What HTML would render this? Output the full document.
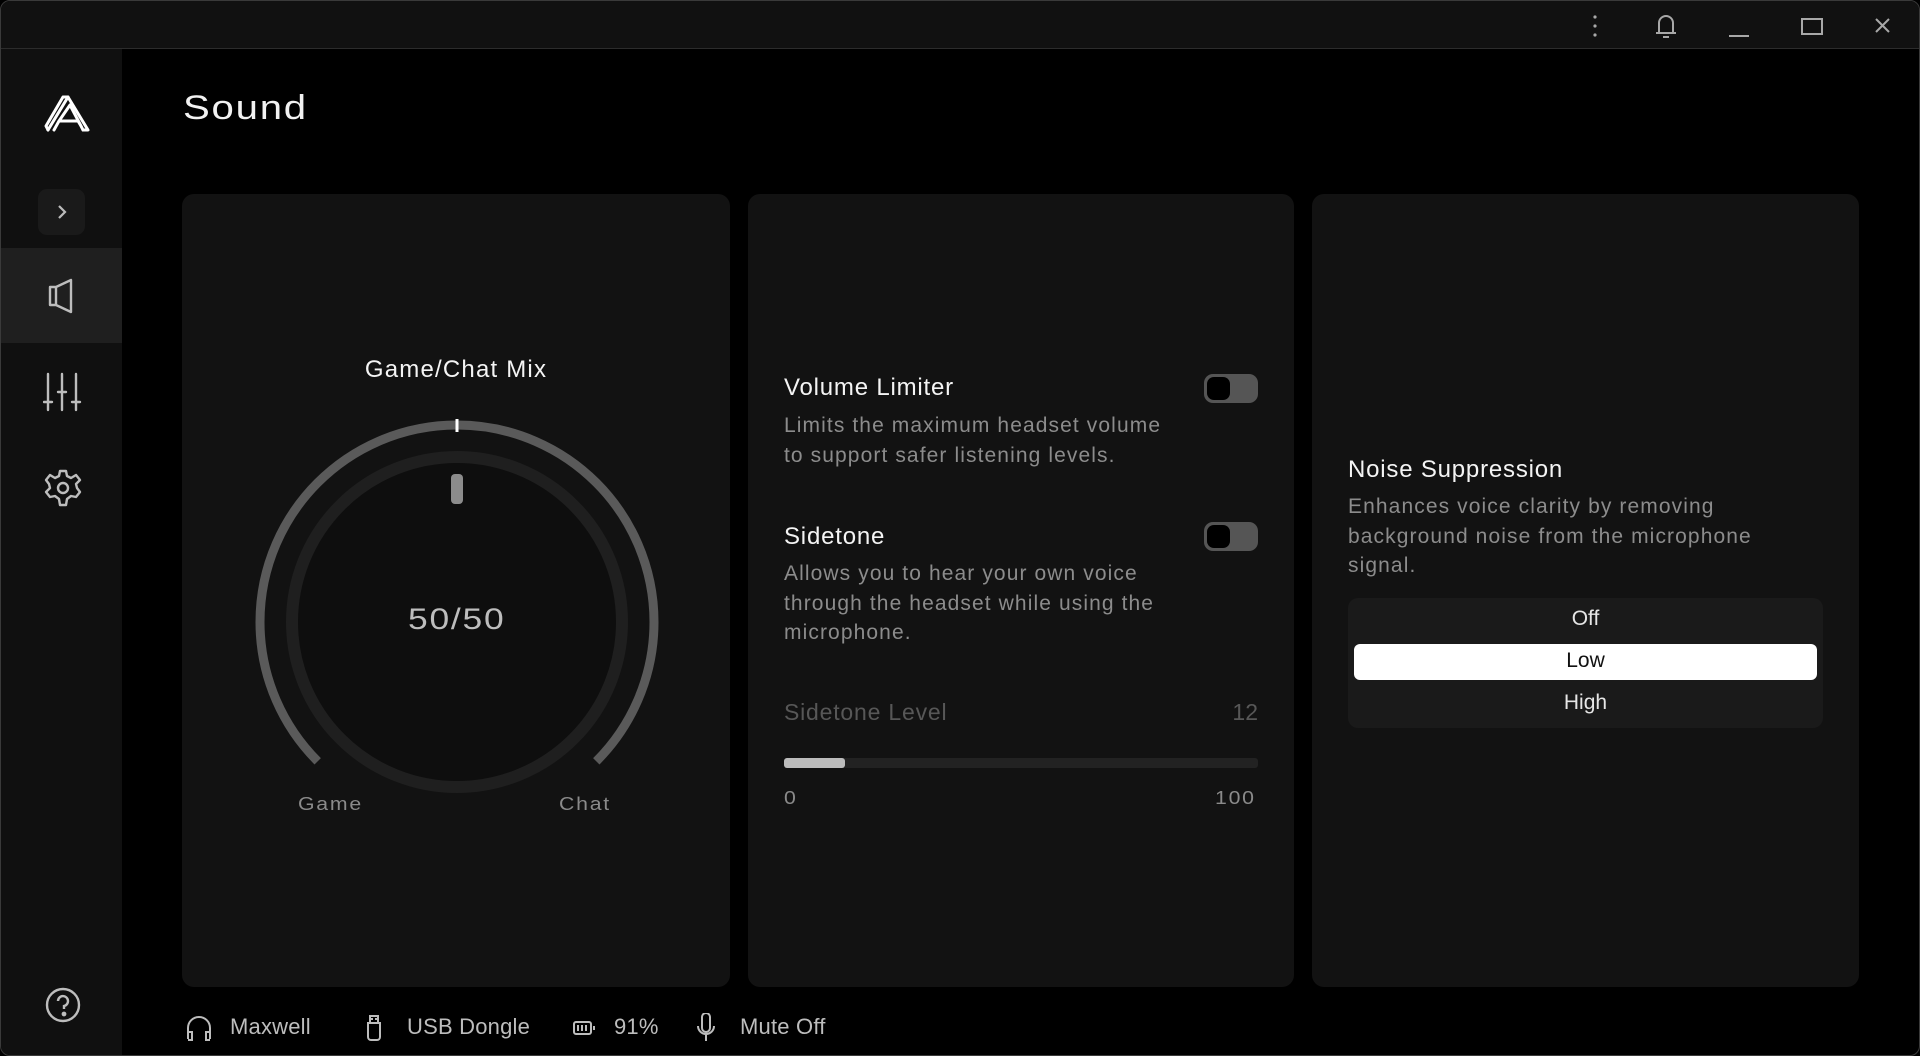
<!DOCTYPE html>
<html><head><meta charset="utf-8"><style>
*{margin:0;padding:0;box-sizing:border-box}
html,body{width:1920px;height:1056px;background:#000;overflow:hidden;font-family:"Liberation Sans",sans-serif;color:#fff}
.win{position:absolute;left:0;top:0;width:1920px;height:1056px;background:#000;border:1px solid #3a3a3a;border-radius:10px;overflow:hidden}
.title{position:absolute;left:0;top:0;width:1920px;height:48px;background:#111;border-bottom:1px solid #2c2c2c}
.side{position:absolute;left:0;top:48px;width:121px;height:1008px;background:#101010}
.act{position:absolute;left:0;top:199px;width:121px;height:95px;background:#1f1f1f}
.chev{position:absolute;left:37px;top:140px;width:47px;height:46px;background:#1a1a1a;border-radius:9px}
.abs{position:absolute}
.card{position:absolute;top:193px;height:793px;background:#121212;border-radius:12px}
.wide{letter-spacing:1.5px;display:inline-block;transform:scaleX(1.18);transform-origin:left center}
.h{font-size:24px;color:#f4f4f4;letter-spacing:0.8px}
.d{font-size:21px;color:#8c8c8c;line-height:29.5px;letter-spacing:1.1px}
.tog{position:absolute;width:54px;height:29px;background:#555;border-radius:9px}
.tog:after{content:"";position:absolute;left:3px;top:3px;width:23px;height:23px;background:#000;border-radius:7px}
.foot{position:absolute;top:1013px;font-size:22px;color:#bdbdbd;letter-spacing:0.2px}
</style></head><body>
<div class="win">
<div class="title">
<svg class="abs" style="left:1580px;top:10px" width="320" height="30" fill="none" stroke="#a8a8a8" stroke-width="2">
<circle cx="14" cy="6" r="1.6" fill="#a8a8a8" stroke="none"/><circle cx="14" cy="15" r="1.6" fill="#a8a8a8" stroke="none"/><circle cx="14" cy="24" r="1.6" fill="#a8a8a8" stroke="none"/>
<path d="M78 22 V12 a7 7 0 0 1 14 0 V22 Z M75 22 H95 M82 26 H88"/>
<path d="M148 25 H168"/>
<rect x="221" y="8" width="20" height="15"/>
<path d="M295 8 L308 21 M308 8 L295 21"/>
</svg>
</div>
<div class="side">
<div class="act"></div>
<svg class="abs" style="left:42px;top:44px" width="50" height="42" fill="none" stroke="#fff" stroke-width="3" stroke-linejoin="round" stroke-linecap="round">
<path d="M5 37 L25 4 L45 37 H40"/><path d="M25 4 L20 4 L3 33 L5 37"/><path d="M11 37 L16 28 H35 L38 33 M16 28 L27 12 L38 33 L40 37"/>
</svg>
<div class="chev"><svg class="abs" style="left:16px;top:15px" width="16" height="16" fill="none" stroke="#bbb" stroke-width="2.2"><path d="M5 2 L11 8 L5 14"/></svg></div>
<svg class="abs" style="left:46px;top:228px" width="30" height="38" fill="none" stroke="#bdbdbd" stroke-width="2.4" stroke-linejoin="round">
<path d="M3 10 H9 L24 3 V35 L9 28 H3 Z M9 10 V28"/>
</svg>
<svg class="abs" style="left:42px;top:323px" width="40" height="40" fill="none" stroke="#bdbdbd" stroke-width="2.4" stroke-linecap="round">
<path d="M5 2 V38 M19 2 V38 M33 2 V38 M1 30 H9 M15 20 H23 M29 30 H37"/>
</svg>
<svg class="abs" style="left:43px;top:420px" width="38" height="38" fill="none" stroke="#bdbdbd" stroke-width="2.4" stroke-linejoin="round">
<path d="M16 2 H22 L23 7 L27 9 L32 6 L36 11 L32 15 L33 19 L36 23 L32 28 L27 27 L23 30 L22 36 H16 L15 30 L11 27 L6 28 L2 23 L6 19 L5 15 L2 11 L6 6 L11 9 L15 7 Z"/>
<circle cx="19" cy="19" r="5"/>
</svg>
<svg class="abs" style="left:43px;top:937px" width="38" height="38" fill="none" stroke="#bdbdbd" stroke-width="2.4">
<circle cx="19" cy="19" r="16"/><path d="M14 15 a5 5 0 1 1 6 5 V23"/><circle cx="20" cy="28" r="1.2" fill="#bdbdbd"/>
</svg>
</div>

<div class="abs" style="left:182px;top:88px;font-size:34px;color:#f2f2f2"><span class="wide">Sound</span></div>

<div class="card" style="left:181px;width:548px">
<div class="abs" style="left:0;width:548px;top:162px;text-align:center;font-size:24px;letter-spacing:1.2px;color:#f4f4f4">Game/Chat Mix</div>
</div>
<svg class="abs" style="left:181px;top:193px" width="548" height="793">
<circle cx="275" cy="428" r="165" fill="#0e0e0e" stroke="#1f1f1f" stroke-width="12"/>
<path d="M 135.7 567.3 A 197 197 0 1 1 414.3 567.3" fill="none" stroke="#5a5a5a" stroke-width="9"/>
<rect x="273.5" y="225" width="3" height="13" fill="#fff"/>
<rect x="269" y="280" width="12" height="30" rx="4" fill="#8c8c8c"/>
</svg>
<div class="abs" style="left:407px;top:602px;font-size:30px;color:#bdbdbd"><span class="wide">50/50</span></div>
<div class="abs" style="left:297px;top:793px;font-size:18px;color:#8a8a8a"><span class="wide">Game</span></div>
<div class="abs" style="left:558px;top:793px;font-size:18px;color:#8a8a8a"><span class="wide">Chat</span></div>

<div class="card" style="left:747px;width:546px"></div>
<div class="abs h" style="left:783px;top:373px">Volume Limiter</div>
<div class="tog" style="left:1203px;top:373px"></div>
<div class="abs d" style="left:783px;top:410px">Limits the maximum headset volume<br>to support safer listening levels.</div>
<div class="abs h" style="left:783px;top:522px">Sidetone</div>
<div class="tog" style="left:1203px;top:521px"></div>
<div class="abs d" style="left:783px;top:558px">Allows you to hear your own voice<br>through the headset while using the<br>microphone.</div>
<div class="abs" style="left:783px;top:698px;font-size:23px;letter-spacing:0.8px;color:#575757">Sidetone Level</div>
<div class="abs" style="left:1200px;width:57px;text-align:right;top:698px;font-size:23px;color:#575757">12</div>
<div class="abs" style="left:783px;top:757px;width:474px;height:10px;background:#222;border-radius:3px"></div>
<div class="abs" style="left:783px;top:757px;width:61px;height:10px;background:#bcbcbc;border-radius:3px"></div>
<div class="abs" style="left:783px;top:787px;font-size:18px;color:#8a8a8a"><span class="wide">0</span></div>
<div class="abs" style="left:1214px;top:787px;font-size:18px;color:#8a8a8a"><span class="wide">100</span></div>

<div class="card" style="left:1311px;width:547px"></div>
<div class="abs h" style="left:1347px;top:455px">Noise Suppression</div>
<div class="abs d" style="left:1347px;top:491px">Enhances voice clarity by removing<br>background noise from the microphone<br>signal.</div>
<div class="abs" style="left:1347px;top:597px;width:475px;height:130px;background:#1a1a1a;border-radius:10px"></div>
<div class="abs" style="left:1353px;top:643px;width:463px;height:36px;background:#fff;border-radius:6px"></div>
<div class="abs" style="left:1347px;width:475px;text-align:center;top:606px;font-size:21px;color:#e6e6e6">Off</div>
<div class="abs" style="left:1347px;width:475px;text-align:center;top:648px;font-size:21px;color:#111">Low</div>
<div class="abs" style="left:1347px;width:475px;text-align:center;top:690px;font-size:21px;color:#e6e6e6">High</div>

<svg class="abs" style="left:184px;top:1012px" width="560" height="30" fill="none" stroke="#bdbdbd" stroke-width="2">
<path d="M3 26 V15 a11 11 0 0 1 22 0 V26 M3 19 H7 V27 H3 M25 19 H21 V27 H25"/>
<path d="M183 10 H195 V24 a3 3 0 0 1 -3 3 H186 a3 3 0 0 1 -3 -3 Z M185 10 V3 H193 V10 M187 5 V7 M191 5 V7"/>
<rect x="389" y="9" width="17" height="12" rx="2"/><path d="M409 13 V17 M393 12 V18 M397 12 V18 M401 12 V18"/>
<path d="M517 4 a4 4 0 0 1 8 0 V15 a4 4 0 0 1 -8 0 Z M513 13 a8 8 0 0 0 16 0 M521 21 V28"/>
</svg>
<div class="foot" style="left:229px">Maxwell</div>
<div class="foot" style="left:406px">USB Dongle</div>
<div class="foot" style="left:613px">91%</div>
<div class="foot" style="left:739px">Mute Off</div>
</div>
</body></html>
